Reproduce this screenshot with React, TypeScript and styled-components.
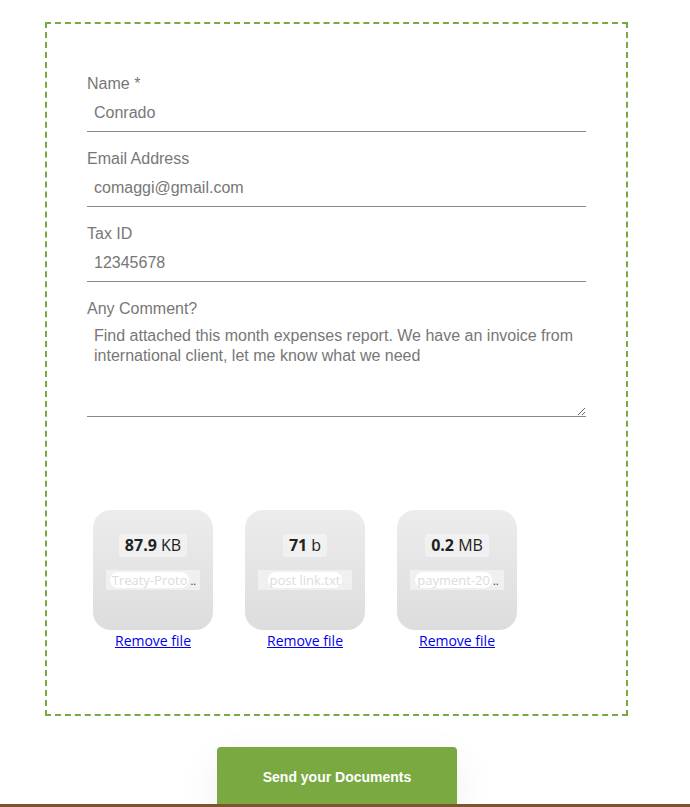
import React from 'react';
import styled, { createGlobalStyle } from 'styled-components';

// Upload form: contact fields, dropped file previews, submit button

const GlobalStyle = createGlobalStyle`
  html, body {
    margin: 0;
    padding: 0;
    background: #ffffff;
    font-family: "Liberation Sans", Arial, sans-serif;
  }
`;

const Page = styled.div`
  width: 690px;
  height: 807px;
  overflow: hidden;
  display: flex;
  flex-direction: column;
`;

const FormBox = styled.form`
  flex-shrink: 0;
  margin: 22px 0 0 45px;
  width: 583px;
  height: 694px;
  box-sizing: border-box;
  border: 2px dashed #7aa944;
  padding: 52px 40px 0 40px;
  display: flex;
  flex-direction: column;
`;

const Field = styled.div`
  display: flex;
  flex-direction: column;
  margin-bottom: 19px;
`;

const Label = styled.label`
  font-size: 16px;
  line-height: 16px;
  padding-bottom: 2px;
  color: #777777;
`;

const Input = styled.input`
  height: 38px;
  box-sizing: border-box;
  border: none;
  border-bottom: 1px solid #888888;
  padding: 0 7px;
  margin: 0;
  font-family: "Liberation Sans", Arial, sans-serif;
  font-size: 16px;
  color: #777777;
  background: transparent;
  outline: none;
`;

const TextArea = styled.textarea`
  height: 98px;
  box-sizing: border-box;
  border: none;
  border-bottom: 1px solid #888888;
  padding: 7px 7px;
  margin: 0;
  font-family: "Liberation Sans", Arial, sans-serif;
  font-size: 16px;
  line-height: 20px;
  color: #777777;
  background: transparent;
  outline: none;
  resize: vertical;
`;

const Previews = styled.div`
  display: flex;
  gap: 32px;
  margin: 74px 0 0 6px;
`;

const Preview = styled.div`
  width: 120px;
  display: flex;
  flex-direction: column;
  align-items: center;
`;

const Thumb = styled.div`
  width: 120px;
  height: 120px;
  border-radius: 18px;
  background: linear-gradient(to bottom, #ececec, #dddddd);
  display: flex;
  flex-direction: column;
  align-items: center;
  padding-top: 24px;
  box-sizing: border-box;
  font-family: "Open Sans", "Noto Sans", sans-serif;
`;

const Size = styled.div`
  background: rgba(255, 255, 255, 0.4);
  border-radius: 3px;
  padding: 0 6px;
  height: 23px;
  line-height: 23px;
  font-size: 16px;
  color: #222222;
  margin-bottom: 13px;

  strong {
    font-weight: 700;
  }
`;

const NameBar = styled.div`
  width: 94px;
  height: 20px;
  background: rgba(255, 255, 255, 0.45);
  display: flex;
  align-items: center;
  justify-content: center;
  font-size: 13px;
  color: #dcdcdc;
  white-space: nowrap;
`;

const NamePill = styled.span`
  background: #ffffff;
  border-radius: 8px;
  padding: 0 2px;
  line-height: 16px;
`;

const Dots = styled.span`
  color: #333333;
  font-size: 11px;
  margin-left: 1px;
`;

const RemoveLink = styled.a`
  margin-top: 1px;
  font-family: "Open Sans", "Noto Sans", sans-serif;
  font-size: 14px;
  line-height: 19px;
  color: #0000ee;
  text-decoration: underline;
  cursor: pointer;
`;

const ButtonRow = styled.div`
  display: flex;
  margin: 31px 0 0 217px;
`;

const SendButton = styled.button`
  width: 240px;
  height: 57px;
  padding-top: 3px;
  border: none;
  border-radius: 4px 4px 0 0;
  background: #7aa942;
  color: #ffffff;
  font-family: "Liberation Sans", Arial, sans-serif;
  font-weight: 700;
  font-size: 14px;
  box-shadow: 0 14px 40px rgba(0, 0, 0, 0.07);
  cursor: pointer;
`;

const Footer = styled.footer`
  height: 20px;
  background: #7a5630;
`;

type FileItem = { size: string; unit: string; name: string };

const files: FileItem[] = [
  { size: '87.9', unit: 'KB', name: 'Treaty-Proto' },
  { size: '71', unit: 'b', name: 'post link.txt' },
  { size: '0.2', unit: 'MB', name: 'payment-20' },
];

const App: React.FC = () => {
  return (
    <Page>
      <GlobalStyle />
      <FormBox onSubmit={(e) => e.preventDefault()}>
        <Field>
          <Label>Name *</Label>
          <Input defaultValue="Conrado" />
        </Field>
        <Field>
          <Label>Email Address</Label>
          <Input defaultValue="comaggi@gmail.com" />
        </Field>
        <Field>
          <Label>Tax ID</Label>
          <Input defaultValue="12345678" />
        </Field>
        <Field>
          <Label>Any Comment?</Label>
          <TextArea defaultValue="Find attached this month expenses report. We have an invoice from international client, let me know what we need" />
        </Field>

        <Previews>
          {files.map((f) => (
            <Preview key={f.name}>
              <Thumb>
                <Size>
                  <strong>{f.size}</strong> {f.unit}
                </Size>
                <NameBar>
                  <NamePill>{f.name}</NamePill>
                  {f.unit !== 'b' && <Dots>..</Dots>}
                </NameBar>
              </Thumb>
              <RemoveLink>Remove file</RemoveLink>
            </Preview>
          ))}
        </Previews>
      </FormBox>

      <ButtonRow>
        <SendButton type="button">Send your Documents</SendButton>
      </ButtonRow>
      <Footer />
    </Page>
  );
};

export default App;
